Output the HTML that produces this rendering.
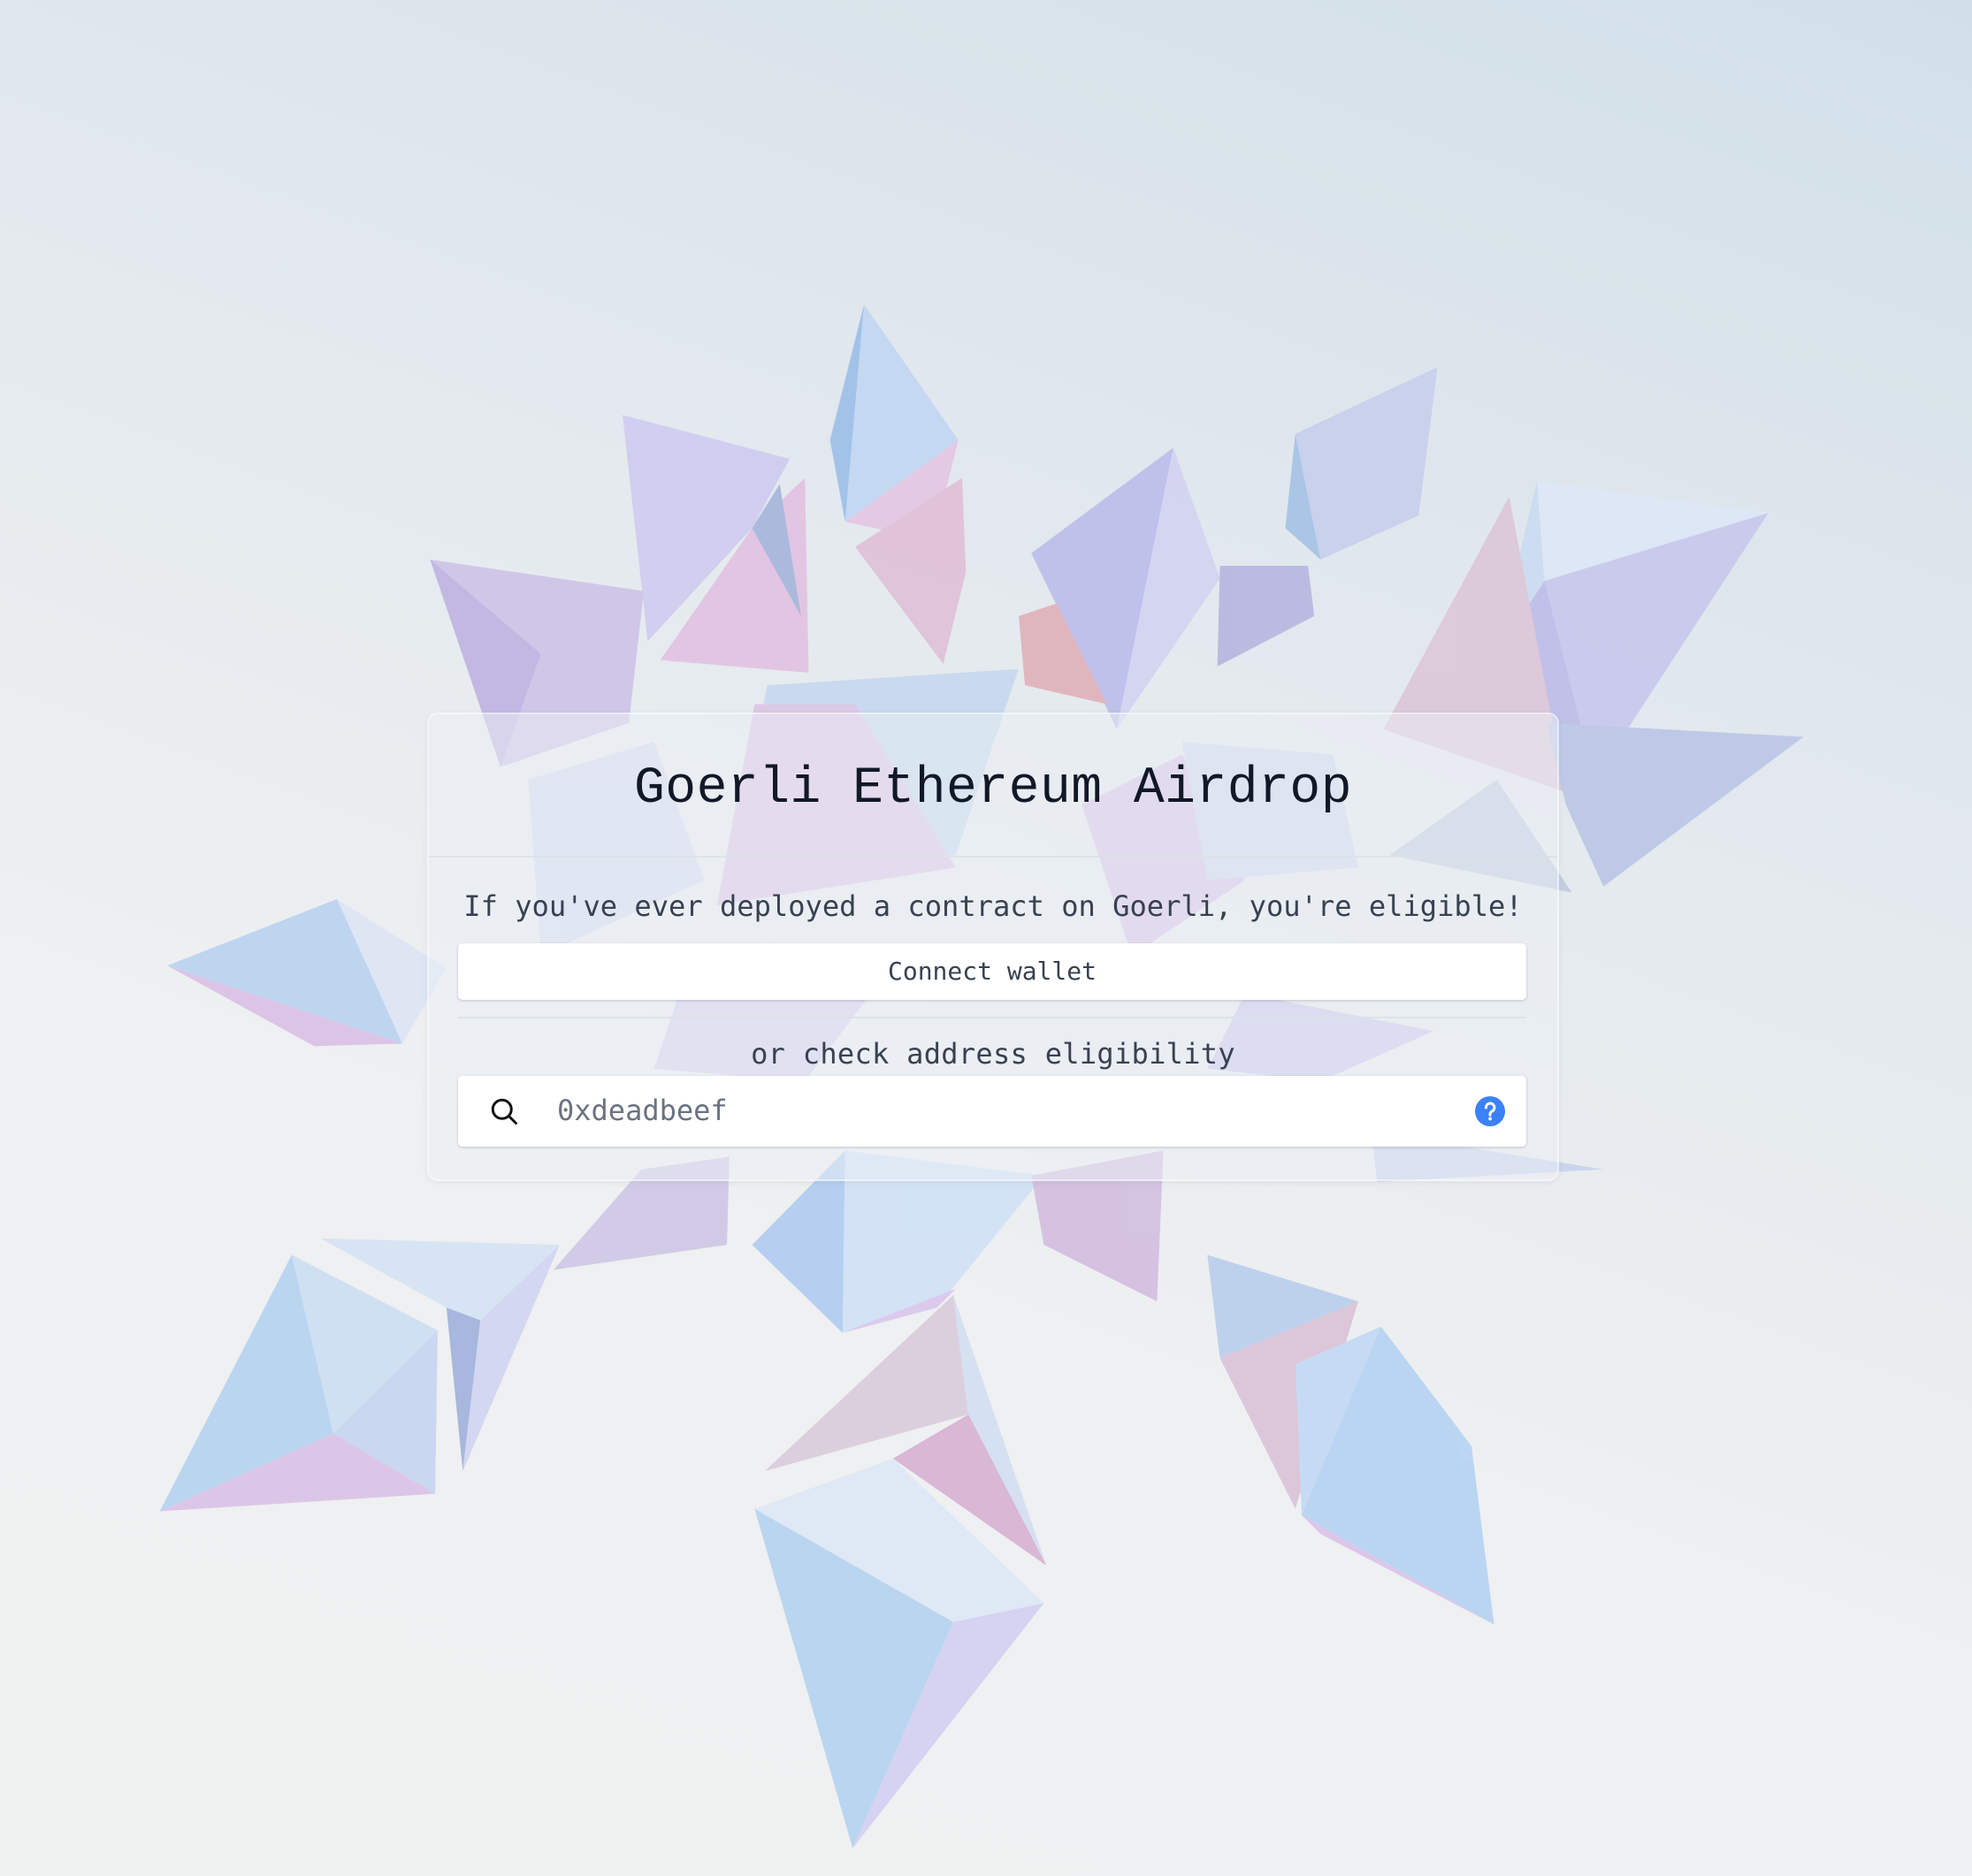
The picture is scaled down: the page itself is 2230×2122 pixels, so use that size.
<!DOCTYPE html>
<html><head><meta charset="utf-8"><style>
html,body{margin:0;padding:0;width:2230px;height:2122px;overflow:hidden}
body{background:linear-gradient(200deg,#d2dfe9 0%,#e3e9ee 35%,#eef0f1 65%,#f0f1f1 100%);position:relative;font-family:"DejaVu Sans Mono","Liberation Mono",monospace}
svg.bg{position:absolute;left:0;top:0;width:2230px;height:2122px}
.card{position:absolute;left:483px;top:806px;width:1276px;height:526px;border:2px solid rgba(255,255,255,0.45);border-radius:12px;background:rgba(236,240,245,0.5);box-shadow:0 2px 8px rgba(0,0,0,0.06)}
.title{position:absolute;left:0;right:0;top:52px;text-align:center;font-family:"Liberation Mono",monospace;font-size:58px;color:#111827;letter-spacing:0.5px}
.hr1{position:absolute;left:0;right:0;top:160px;height:2px;background:rgba(220,225,232,0.9)}
.sub{position:absolute;left:0;right:0;top:198px;text-align:center;font-size:32.1px;color:#374151}
.btn{position:absolute;left:33px;width:1208px;top:259px;height:64px;background:#fff;border-radius:5px;box-shadow:0 1px 3px rgba(0,0,0,0.18);text-align:center;line-height:64px;font-size:28px;color:#374151}
.hr2{position:absolute;left:33px;width:1208px;top:342px;height:2px;background:rgba(220,225,232,0.9)}
.or{position:absolute;left:0;right:0;top:365px;text-align:center;font-size:32px;color:#374151;letter-spacing:0.3px}
.inp{position:absolute;left:33px;width:1208px;top:409px;height:80px;background:#fff;border-radius:5px;box-shadow:0 1px 3px rgba(0,0,0,0.18)}
.ph{position:absolute;left:112px;top:20px;font-size:32px;color:#6b7280}
</style></head><body>
<svg class="bg" viewBox="0 0 1568 1492" preserveAspectRatio="none">
<g opacity="0.95">
<polygon points="687,242 660,350 672,415" fill="#9fc0e8"/>
<polygon points="687,242 672,415 762,350" fill="#c4d8f2"/>
<polygon points="672,415 762,350 742,430" fill="#e4c8e4"/>
<polygon points="680,435 765,380 768,455 750,528" fill="#e0c2d8"/>
<polygon points="495,330 628,365 598,420 515,510" fill="#d0cdf0"/>
<polygon points="598,420 640,380 643,535 525,525" fill="#e2c4e2"/>
<polygon points="620,385 637,490 598,420" fill="#a8b8dc"/>
<polygon points="342,445 512,470 500,575 398,610" fill="#cfc6e8"/>
<polygon points="342,445 430,520 398,610" fill="#c2b6e2"/>
<polygon points="820,440 933,356 888,580" fill="#bfbfea"/>
<polygon points="933,356 970,460 888,580" fill="#d4d4f2"/>
<polygon points="810,490 840,480 880,560 815,545" fill="#e0b4bc"/>
<polygon points="1030,345 1143,292 1128,410 1050,445" fill="#c8d0ec"/>
<polygon points="1030,345 1022,420 1050,445" fill="#a8c4e6"/>
<polygon points="970,450 1040,450 1045,490 968,530" fill="#b8b8e0"/>
<polygon points="1222,382 1406,408 1228,462" fill="#dde8f6"/>
<polygon points="1222,382 1228,462 1190,520" fill="#ccdcf2"/>
<polygon points="1228,462 1406,408 1268,620" fill="#c9c9ee"/>
<polygon points="1190,520 1228,462 1268,620" fill="#c0bee8"/>
<polygon points="1100,580 1200,395 1245,630" fill="#dcc8d8"/>
<polygon points="1230,575 1434,586 1275,705 1245,640" fill="#bcc8e6"/>
<polygon points="1105,680 1190,620 1250,710" fill="#c4cde0"/>
<polygon points="610,545 810,532 760,680 580,700" fill="#c8daf0"/>
<polygon points="600,560 680,560 760,690 570,720" fill="#dcc8e6"/>
<polygon points="420,620 520,590 560,700 430,760" fill="#d6dcf0"/>
<polygon points="860,640 940,600 990,700 900,760" fill="#d8c6e8"/>
<polygon points="940,590 1060,600 1080,690 960,700" fill="#cfd8ee"/>
<polygon points="990,790 1140,820 1050,860 960,850" fill="#cbc8ec"/>
<polygon points="540,790 700,780 640,860 520,850" fill="#d8d0ec"/>
<polygon points="133,768 268,715 320,830" fill="#bcd4f0"/>
<polygon points="268,715 355,770 320,830" fill="#dfe6f4"/>
<polygon points="133,768 320,830 250,832" fill="#dcc2e6"/>
<polygon points="232,998 265,1140 127,1202" fill="#b8d4f0"/>
<polygon points="232,998 348,1058 265,1140" fill="#cfe0f4"/>
<polygon points="348,1058 346,1188 265,1140" fill="#c8d6f2"/>
<polygon points="127,1202 265,1140 346,1188" fill="#dcc4e8"/>
<polygon points="255,985 445,990 382,1050 355,1040" fill="#d6e4f4"/>
<polygon points="355,1040 382,1050 368,1170" fill="#a4b4dc"/>
<polygon points="382,1050 445,990 368,1170" fill="#d2d6f2"/>
<polygon points="440,1010 510,930 580,920 578,990" fill="#d0c8e6"/>
<polygon points="598,990 672,915 670,1060" fill="#b4cef0"/>
<polygon points="672,915 830,935 745,1040 670,1060" fill="#d2e2f6"/>
<polygon points="670,1060 745,1040 760,1025" fill="#dcc8ec"/>
<polygon points="820,935 925,915 920,1035 830,990" fill="#d4c0e0"/>
<polygon points="608,1170 758,1030 770,1125" fill="#dccedc"/>
<polygon points="758,1030 832,1245 770,1125" fill="#d4e0f2"/>
<polygon points="710,1160 770,1125 832,1245" fill="#d8b4d4"/>
<polygon points="600,1200 710,1160 830,1275 758,1290" fill="#dfe8f6"/>
<polygon points="600,1200 758,1290 678,1470" fill="#b8d4f0"/>
<polygon points="758,1290 830,1275 678,1470" fill="#d4d2f2"/>
<polygon points="960,998 1080,1035 970,1080" fill="#bcd0ec"/>
<polygon points="970,1080 1080,1035 1030,1200" fill="#dcc4d8"/>
<polygon points="1030,1085 1098,1055 1035,1205" fill="#c4daf4"/>
<polygon points="1098,1055 1170,1150 1188,1292 1035,1205" fill="#b8d4f2"/>
<polygon points="1035,1205 1188,1292 1050,1220" fill="#dcc4ea"/>
<polygon points="1090,900 1275,930 1095,940" fill="#c8d4ec"/>
</g>
</svg>
<div class="card">
<div class="title">Goerli Ethereum Airdrop</div>
<div class="hr1"></div>
<div class="sub">If you've ever deployed a contract on Goerli, you're eligible!</div>
<div class="btn">Connect wallet</div>
<div class="hr2"></div>
<div class="or">or check address eligibility</div>
<div class="inp">
<svg style="position:absolute;left:34px;top:22px" width="36" height="36" viewBox="0 0 24 24" fill="none" stroke="#111" stroke-width="2" stroke-linecap="round"><circle cx="10.5" cy="10.5" r="7"/><path d="M15.5 15.5L21 21"/></svg>
<div class="ph">0xdeadbeef</div>
<svg style="position:absolute;left:1150px;top:23px" width="34" height="34" viewBox="0 0 20 20"><circle cx="10" cy="10" r="10" fill="#3b82f6"/><path d="M7.3 7.6a2.8 2.8 0 1 1 3.9 2.5c-.8.4-1.2.9-1.2 1.8v.6" stroke="#fff" stroke-width="1.8" fill="none" stroke-linecap="round"/><circle cx="10" cy="15" r="1.1" fill="#fff"/></svg>
</div>
</div>
</body></html>
